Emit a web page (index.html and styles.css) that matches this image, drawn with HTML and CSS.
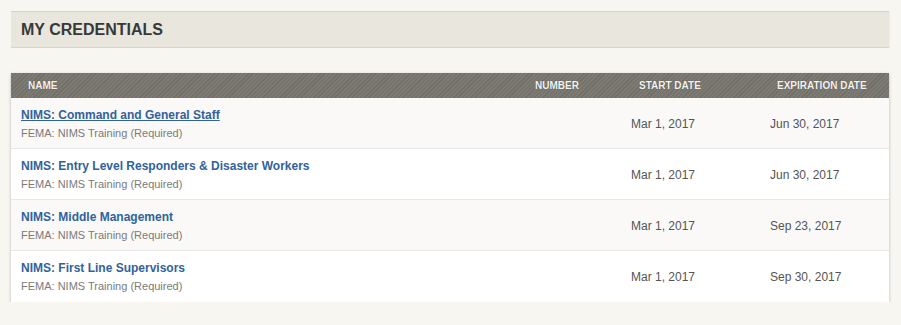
FILE: index.html
```html
<!DOCTYPE html>
<html>
<head>
<meta charset="utf-8">
<link rel="stylesheet" href="styles.css">
</head>
<body>
<div class="page">
  <div class="titlebar"><h1 class="title">MY CREDENTIALS</h1></div>
  <div class="card">
    <div class="row head">
      <div class="th th-name">NAME</div>
      <div class="th th-number">NUMBER</div>
      <div class="th th-start">START DATE</div>
      <div class="th th-exp">EXPIRATION DATE</div>
    </div>
    <div class="row item odd">
      <div class="cell name"><a class="link active" href="#">NIMS: Command and General Staff</a><div class="sub">FEMA: NIMS Training (Required)</div></div>
      <div class="cell number"></div>
      <div class="cell date">Mar 1, 2017</div>
      <div class="cell date">Jun 30, 2017</div>
    </div>
    <div class="row item">
      <div class="cell name"><a class="link" href="#">NIMS: Entry Level Responders &amp; Disaster Workers</a><div class="sub">FEMA: NIMS Training (Required)</div></div>
      <div class="cell number"></div>
      <div class="cell date">Mar 1, 2017</div>
      <div class="cell date">Jun 30, 2017</div>
    </div>
    <div class="row item odd">
      <div class="cell name"><a class="link" href="#">NIMS: Middle Management</a><div class="sub">FEMA: NIMS Training (Required)</div></div>
      <div class="cell number"></div>
      <div class="cell date">Mar 1, 2017</div>
      <div class="cell date">Sep 23, 2017</div>
    </div>
    <div class="row item last">
      <div class="cell name"><a class="link" href="#">NIMS: First Line Supervisors</a><div class="sub">FEMA: NIMS Training (Required)</div></div>
      <div class="cell number"></div>
      <div class="cell date">Mar 1, 2017</div>
      <div class="cell date">Sep 30, 2017</div>
    </div>
  </div>
</div>
</body>
</html>
```

FILE: styles.css
```css
html, body {
  margin: 0;
  padding: 0;
  background: #f7f6f1;
  font-family: "Liberation Sans", Arial, sans-serif;
}
.page {
  padding: 11px 12px 0 11px;
}
.titlebar {
  height: 35px;
  background: #e9e6de;
  border-top: 1px solid #d6d3ca;
  border-bottom: 1px solid #d6d3ca;
  display: flex;
  align-items: center;
  padding-left: 10px;
  box-shadow: 1px 0 0 #efede8;
}
.title {
  margin: 0;
  font-size: 16px;
  font-weight: bold;
  color: #383838;
  line-height: 18px;
  padding-top: 1px;
}
.card {
  margin-top: 25px;
  background: #fff;
  box-shadow: 0 1px 3px rgba(0, 0, 0, 0.25);
}
.row {
  display: grid;
  grid-template-columns: 514px 96px 139px 1fr;
}
.head {
  height: 25px;
  align-items: center;
  background-color: #77756e;
  background-image: repeating-linear-gradient(135deg, #706e67 0, #706e67 1px, #7c7a73 1px, #7c7a73 3px);
}
.th {
  font-size: 10px;
  font-weight: bold;
  color: #f2f2f0;
  text-shadow: 0 0 1px rgba(0, 0, 0, 0.4);
  line-height: 12px;
  padding-top: 1px;
}
.th-name { padding-left: 17px; }
.th-number { padding-left: 10px; }
.th-start { padding-left: 18px; }
.th-exp { padding-left: 17px; }
.item {
  height: 50px;
  border-bottom: 1px solid #e6e6e4;
  align-items: center;
}
.item.last { border-bottom: none; height: 50px; padding-bottom: 1px; }
.item.odd { background: #faf9f7; }
.cell.name {
  padding: 9px 0 0 10px;
  align-self: start;
}
.link {
  display: block;
  font-size: 12px;
  font-weight: bold;
  color: #31629c;
  text-decoration: none;
  line-height: 16px;
}
.link.active { text-decoration: underline; }
.sub {
  margin-top: 3px;
  font-size: 11px;
  color: #7a7a7a;
  line-height: 14px;
}
.date {
  padding-left: 10px;
  font-size: 12px;
  color: #555;
  line-height: 16px;
  padding-top: 1px;
}
```
